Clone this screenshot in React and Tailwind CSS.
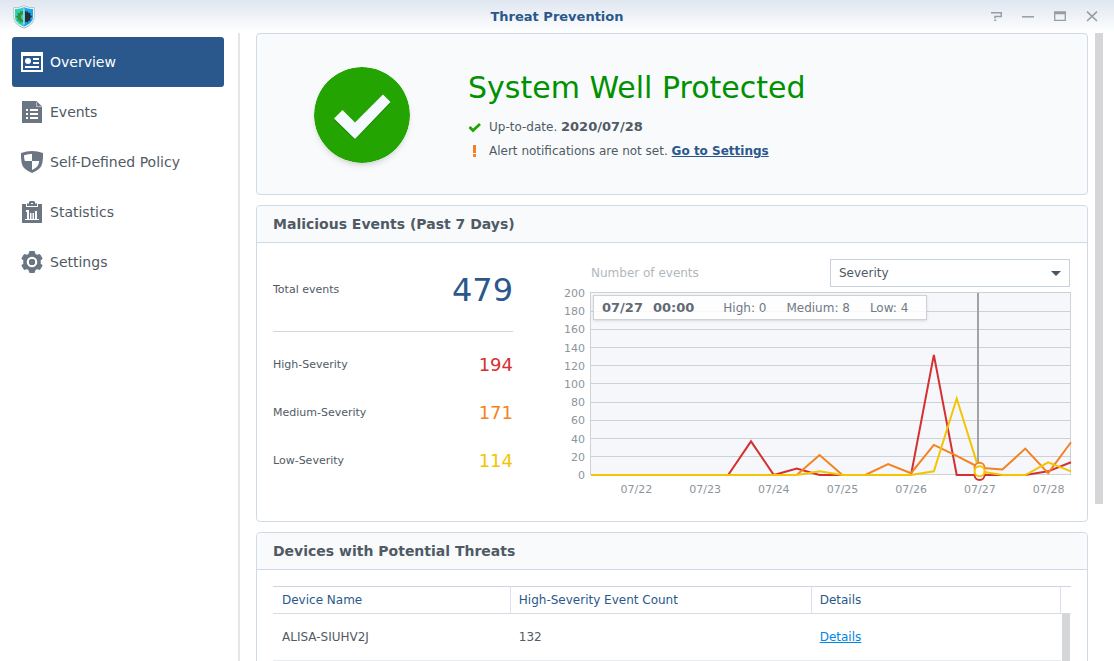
import React from "react";

const G = "#6b7682";

function OverviewIcon() {
  return (
    <svg width="22" height="22" viewBox="0 0 22 22" aria-hidden="true">
      <path fill="#fff" fillRule="evenodd" d="M0 1h22v20H0zM2 5v14h18V5z" />
      <circle cx="7" cy="10" r="3" fill="#fff" />
      <path fill="#fff" d="M12 7h6v2h-6zM12 11h6v2h-6zM4 15h14v2H4z" />
    </svg>
  );
}

function EventsIcon() {
  return (
    <svg width="22" height="22" viewBox="0 0 22 22" aria-hidden="true">
      <path fill={G} d="M1 0h14.500l5.500 5.500V22H1z" />
      <path fill="#fff" d="M16 1v4.500h4.500V6H15.500V1zM5 8h2v2H5zM9 8h8v2H9zM5 12h2v2H5zM9 12h8v2H9zM5 16h2v2H5zM9 16h8v2H9z" />
    </svg>
  );
}

function PolicyIcon() {
  return (
    <svg width="22" height="22" viewBox="0 0 22 22" aria-hidden="true">
      <path fill={G} d="M0 2C4 .8 7 0 11 0s7 .8 11 2c0 5 0 9-1.500 12.500C19 18 15 20 11 22 7 20 3 18 1.500 14.500 0 11 0 7 0 2z" />
      <path fill="#fff" d="M3 4.200C6 3.300 8.500 3 11 3v7H3.800C3.200 8 3 6.200 3 4.200zM11 10h7.200c-.3 2-.6 3-1.200 4.200C15.800 16.600 13.500 17.700 11 19z" />
    </svg>
  );
}

function StatisticsIcon() {
  return (
    <svg width="22" height="22" viewBox="0 0 22 22" aria-hidden="true">
      <path fill={G} fillRule="evenodd" d="M1 3h4v3h12V3h4v19H1z" />
      <path fill={G} fillRule="evenodd" d="M6 2.500h2V1l1-1h4l1 1v1.500h2V5H6zM10 2v1h2V2z" />
      <path fill="#fff" d="M4 18h14v1H4zM5 9h3v9H6v-7H5zM9 12h1.500v6H9zM11.500 12H13v6h-1.500zM14 10h2v8h-2z" />
    </svg>
  );
}

function SettingsIcon() {
  return (
    <svg width="22" height="22" viewBox="0 0 22 22" aria-hidden="true">
      <path
        fill={G}
        stroke={G}
        strokeWidth="1"
        strokeLinejoin="round"
        d="M8.700.5h4.600l.8 2.700 1.900 1.100 2.800-.7 2.300 3.900-1.900 2v3l1.900 2-2.300 3.900-2.800-.7-1.900 1.100-.8 2.700H8.700l-.8-2.700L6 17.700l-2.800.7-2.300-3.900 1.900-2v-3L.9 7.500l2.300-3.900 2.800.7 1.900-1.100z"
      />
      <circle cx="11" cy="11" r="4.200" fill={G} stroke="#fff" strokeWidth="2.200" />
      <circle cx="11" cy="11" r="3" fill={G} />
    </svg>
  );
}

function AppLogo() {
  return (
    <svg width="24" height="24" viewBox="0 0 24 24" aria-hidden="true">
      <path fill="#9aa7b1" d="M1.500 2.500C5 2.500 9 1.800 12 .5c3 1.300 7 2 10.500 2V12c0 6-5 9.500-10.500 11.500C6.500 21.500 1.500 18 1.500 12z" />
      <path fill="#e8f4f6" d="M2 3c4 0 7-.8 10-2 3 1.200 6 2 10 2v9c0 5.500-4.500 8.800-10 10.800C6.500 20.800 2 17.500 2 12z" />
      <path fill="#2fd0b4" d="M3 4c3.500 0 6.500-.7 9-1.800v19.400C7 19.500 3 16.700 3 12z" />
      <path fill="#1ba4ee" d="M21 4c-3.500 0-6.500-.7-9-1.800v19.400c5-2.100 9-4.900 9-9.600z" />
      <path fill="#2f9142" d="M11 5.500V17.500L9.500 16.500l-1 2-1-2.800L5 15.500l1-2-2.300-2L6 10.200l-.5-2.400 2.300.2 1-2.500 1 1.200z" />
      <path fill="#23303c" d="M13 5.500V17.500l1.500-1 1 1.500 1-2.300 2.200-.2-.5-2.200 2-2-2-1.300.3-2.200-2.200.2-1-2.200-1 1.200z" />
      <path fill="#4fd08a" d="M11 9a3.200 3.200 0 0 0 0 6z" />
      <path fill="#c7f2ff" d="M11.500 3.500h1v16h-1z" />
    </svg>
  );
}

const NAV = [
  { label: "Overview", icon: <OverviewIcon />, active: true },
  { label: "Events", icon: <EventsIcon /> },
  { label: "Self-Defined Policy", icon: <PolicyIcon /> },
  { label: "Statistics", icon: <StatisticsIcon /> },
  { label: "Settings", icon: <SettingsIcon /> },
];

const WINDOW_BUTTONS = [
  { label: "Help", shape: <path strokeWidth="1.500" d="M1 1.700h10.300v3.800H5v2M4.200 9.300h2" /> },
  { label: "Minimize", shape: <path strokeWidth="1.500" d="M0 5.800h12" /> },
  { label: "Maximize", shape: <path strokeWidth="1.300" d="M.7 1h10.600v8.400H.7zM0 1.800h12M0 2.500h12" /> },
  { label: "Close", shape: <path strokeWidth="1.600" d="M1 .6l10 9.400M11 .6L1 10" /> },
];

function TitleBar() {
  return (
    <header className="grid h-[33px] shrink-0 grid-cols-[1fr_auto_1fr] items-center bg-gradient-to-b from-[#dfe6f0] to-white px-3">
      <AppLogo />
      <h1 className="text-[13px] leading-4 font-bold text-[#2a588c]">Threat Prevention</h1>
      <div className="flex justify-end gap-5 pr-1">
        {WINDOW_BUTTONS.map((b) => (
          <button key={b.label} type="button" aria-label={b.label}>
            <svg width="12" height="12" viewBox="0 0 12 12" fill="none" stroke="#969da3">
              {b.shape}
            </svg>
          </button>
        ))}
      </div>
    </header>
  );
}

function Sidebar() {
  return (
    <nav className="flex w-60 shrink-0 flex-col border-r-2 border-[#e3e5e8] pt-1 pr-[14px] pl-3">
      {NAV.map((n) => (
        <a
          key={n.label}
          href="#"
          className={
            n.active
              ? "flex h-[50px] items-center gap-[7px] rounded-[3px] bg-[#2a588c] pl-[9px] text-sm text-white"
              : "flex h-[50px] items-center gap-[7px] rounded-[3px] pl-[9px] text-sm text-[#505a64]"
          }
        >
          {n.icon}
          {n.label}
        </a>
      ))}
    </nav>
  );
}

function StatusCard() {
  return (
    <section className="flex items-center gap-[58px] rounded border border-[#d0dae6] bg-[#f8fafc] pt-[33px] pb-[31px] pl-[57px]">
      <svg width="96" height="96" viewBox="0 0 96 96" className="shrink-0 rounded-full shadow-md" aria-hidden="true">
        <circle cx="48" cy="48" r="48" fill="#24a400" />
        <path fill="#1c8500" d="M20 53l8.500-8.500L41 56l28-27 7.500 7.500L41 73z" />
        <path fill="#f5faff" d="M20 51.500l8.500-8.500L41 55.500 69 27.500l7.500 7.500L41 72z" />
      </svg>
      <div>
        <h2 className="mb-[6px] text-[30px] leading-[42px] text-[#009100]">System Well Protected</h2>
        <p className="flex h-6 items-center gap-2 text-xs text-[#505a64]">
          <svg width="13" height="12" viewBox="0 0 13 12" aria-hidden="true">
            <path d="M1.500 6l3.500 3.500L12 3" fill="none" stroke="#24a400" strokeWidth="2.800" />
          </svg>
          <span>
            Up-to-date. <b className="text-[13px] leading-4">2020/07/28</b>
          </span>
        </p>
        <p className="flex h-6 items-center gap-2 text-xs text-[#505a64]">
          <svg width="13" height="12" viewBox="0 0 13 12" aria-hidden="true">
            <path d="M5 0h3v8H5zM5 9h3v3H5z" fill="#f58220" />
          </svg>
          <span>
            Alert notifications are not set.{" "}
            <a href="#" className="font-bold text-[#2a588c] underline">
              Go to Settings
            </a>
          </span>
        </p>
      </div>
    </section>
  );
}

function Card({ title, children }) {
  return (
    <section className="rounded border border-[#d0dae6] bg-white">
      <h2 className="h-[37px] rounded-t border-b border-[#d0dae6] bg-[#f8fafc] pl-4 text-sm leading-9 font-bold text-[#505a64]">
        {title}
      </h2>
      {children}
    </section>
  );
}

const SERIES = [
  { name: "High", color: "#d4302f", data: [0, 0, 0, 0, 0, 0, 0, 37, 0, 7, 0, 0, 0, 0, 0, 132, 0, 0, 0, 0, 4, 14] },
  { name: "Medium", color: "#f58220", data: [0, 0, 0, 0, 0, 0, 0, 0, 0, 0, 22, 0, 0, 12, 2, 33, 21, 8, 6, 29, 2, 36] },
  { name: "Low", color: "#f5c400", data: [0, 0, 0, 0, 0, 0, 0, 0, 0, 0, 4, 0, 0, 0, 0, 4, 84, 4, 0, 0, 14, 4] },
];
const TICKS = [200, 180, 160, 140, 120, 100, 80, 60, 40, 20, 0];
const DAYS = ["07/22", "07/23", "07/24", "07/25", "07/26", "07/27", "07/28"];
const SELECTED = 17;
const px = (i) => 1 + (i * 480) / 21;
const py = (v) => 183 - v * 0.91;

function Plot() {
  return (
    <svg viewBox="0 0 481 184" preserveAspectRatio="none" className="block h-[184px] w-full overflow-visible" role="img" aria-label="Number of events">
      <rect x="0" y="0" width="481" height="183" fill="#f5f7fb" />
      <g stroke="#cdd2d7" strokeWidth="1">
        {TICKS.map((t, k) => (
          <path key={t} d={`M0 ${Math.ceil(k * 18.2) + 0.5}H481`} />
        ))}
        <path d="M.5 0V183M480.500 0V183" />
      </g>
      <path d="M388 1V183" stroke="#a0a3a6" strokeWidth="2" />
      {SERIES.map((s) => (
        <polyline
          key={s.name}
          fill="none"
          stroke={s.color}
          strokeWidth="2"
          points={s.data.map((v, i) => `${px(i)},${py(v)}`).join(" ")}
        />
      ))}
      {SERIES.map((s) => (
        <circle key={s.name} cx={px(SELECTED)} cy={py(s.data[SELECTED])} r="5" fill="#fff" stroke={s.color} strokeWidth="2" />
      ))}
    </svg>
  );
}

function Chart() {
  return (
    <div className="min-w-0 flex-1">
      <div className="flex items-center justify-between pr-px pl-[30px]">
        <label htmlFor="group-by" className="text-xs text-[#b0b8be]">
          Number of events
        </label>
        <div className="relative w-60">
          <select
            id="group-by"
            className="block h-7 w-full appearance-none border border-[#c6d2de] bg-white pl-2 text-xs text-[#505a64]"
          >
            <option>Severity</option>
          </select>
          <svg width="10" height="5" viewBox="0 0 10 5" className="pointer-events-none absolute top-3 right-[9px]" aria-hidden="true">
            <path d="M0 0h10L5 5z" fill="#4a5560" />
          </svg>
        </div>
      </div>
      <div className="flex gap-[5px]">
        <div className="flex h-[195px] w-6 flex-col justify-between pt-px text-right text-[11px] leading-3 text-[#8c959d]">
          {TICKS.map((t) => (
            <span key={t}>{t}</span>
          ))}
        </div>
        <div className="relative min-w-0 flex-1 pt-[5px]">
          <Plot />
          <div className="absolute top-2 left-[3px] flex h-[25px] w-[334px] items-center border border-[#cdd2d7] bg-white/85 pl-2 text-xs text-[#707a84] shadow">
            <b className="mr-[29px] flex gap-[10px] text-[13px] text-[#606a74]">
              <span>07/27</span>
              <span>00:00</span>
            </b>
            <span className="flex gap-5">
              <span>High: 0</span>
              <span>Medium: 8</span>
              <span>Low: 4</span>
            </span>
          </div>
          <div className="mt-[6px] -mr-3 ml-3 grid grid-cols-7 text-center text-[11px] leading-4 text-[#8c959d]">
            {DAYS.map((d) => (
              <span key={d}>{d}</span>
            ))}
          </div>
        </div>
      </div>
    </div>
  );
}

function EventsCard() {
  return (
    <Card title="Malicious Events (Past 7 Days)">
      <div className="flex gap-12 px-4 pt-4 pb-[23px]">
        <dl className="w-60 shrink-0 text-[11px] text-[#505a64]">
          <div className="mb-[10px] flex h-[62px] items-center justify-between">
            <dt>Total events</dt>
            <dd className="text-[32px] text-[#2a588c]">479</dd>
          </div>
          <div className="border-t border-[#d5d8da] pt-[9px]">
            <div className="flex h-12 items-center justify-between">
              <dt>High-Severity</dt>
              <dd className="text-lg text-[#d4302f]">194</dd>
            </div>
            <div className="flex h-12 items-center justify-between">
              <dt>Medium-Severity</dt>
              <dd className="text-lg text-[#f58220]">171</dd>
            </div>
            <div className="flex h-12 items-center justify-between">
              <dt>Low-Severity</dt>
              <dd className="text-lg text-[#f5c400]">114</dd>
            </div>
          </div>
        </dl>
        <Chart />
      </div>
    </Card>
  );
}

function DevicesCard() {
  return (
    <Card title="Devices with Potential Threats">
      <div className="px-4 pt-4">
        <div className="relative min-h-40">
          <table className="w-full table-fixed border-separate border-spacing-0 text-left text-xs text-[#505a64]">
            <colgroup>
              <col className="w-[29.8%]" />
              <col className="w-[37.7%]" />
              <col />
              <col className="w-[10px]" />
            </colgroup>
            <thead className="text-[#2a588c]">
              <tr className="h-7">
                <th className="border-y border-r border-t-[#cfd4e0] border-r-[#dce0f2] border-b-[#d8dce2] pl-[9px] font-normal">Device Name</th>
                <th className="border-y border-r border-t-[#cfd4e0] border-r-[#dce0f2] border-b-[#d8dce2] pl-2 font-normal">High-Severity Event Count</th>
                <th className="border-y border-r border-t-[#cfd4e0] border-r-[#dce0f2] border-b-[#d8dce2] pl-2 font-normal">Details</th>
                <td className="border-y border-t-[#cfd4e0] border-b-[#d8dce2]" />
              </tr>
            </thead>
            <tbody>
              <tr className="h-[47px]">
                <td className="border-b border-[#e8eaee] pl-[9px]">ALISA-SIUHV2J</td>
                <td className="border-b border-[#e8eaee] pl-2">132</td>
                <td className="border-b border-[#e8eaee] pl-2">
                  <a href="#" className="text-[#0086e5] underline">
                    Details
                  </a>
                </td>
                <td />
              </tr>
            </tbody>
          </table>
          <div className="absolute top-7 right-px bottom-0 w-2 bg-[#d5d6d8]" />
        </div>
      </div>
    </Card>
  );
}

export default function App() {
  return (
    <div className="flex h-screen flex-col overflow-hidden bg-white font-['DejaVu_Sans',sans-serif]">
      <TitleBar />
      <div className="flex min-h-0 flex-1">
        <Sidebar />
        <main className="min-w-0 flex-1 overflow-hidden pr-[7px] pl-4">
          <div className="flex flex-col gap-[10px]">
            <StatusCard />
            <EventsCard />
            <DevicesCard />
          </div>
        </main>
        <div className="mr-[11px] h-3/4 w-2 shrink-0 bg-[#d5d6d8]" />
      </div>
    </div>
  );
}
